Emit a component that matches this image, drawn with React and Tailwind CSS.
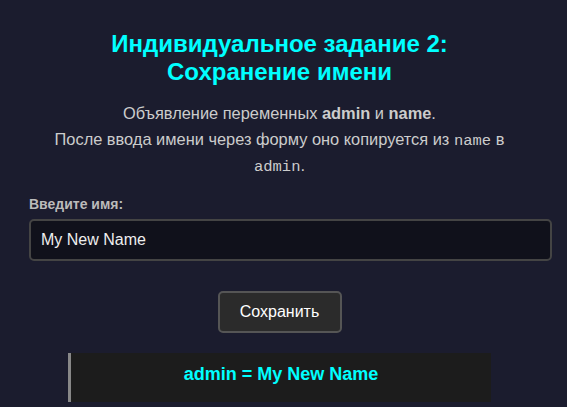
export default function App() {
  const mono = { fontFamily: '"Liberation Mono", "Courier New", monospace' };
  return (
    <div className="min-h-[407px] w-full bg-[#1b1c2e] text-[#cccccc]" style={{ fontFamily: '"Liberation Sans", Arial, sans-serif' }}>
      <div className="w-[501px] ml-[29px] pt-[30px]">
        <h2 className="text-center text-[24px] leading-[28px] font-bold text-[#00ffff]">
          Индивидуальное задание 2:
          <br />
          Сохранение имени
        </h2>
        <p className="mt-[14px] text-center text-[16.4px] leading-[26px] text-[#cccccc]">
          Объявление переменных <b>admin</b> и <b>name</b>.
          <br />
          После ввода имени через форму оно копируется из{" "}
          <code className="text-[15.5px] leading-none" style={mono}>name</code> в
          <br />
          <code className="text-[15.5px] leading-none" style={mono}>admin</code>.
        </p>
        <label className="mt-[18px] block text-[14px] leading-[16px] font-bold text-[#bbbbbb]">Введите имя:</label>
        <input
          className="mt-[7px] block w-[523px] h-[42px] rounded-[5px] border-2 border-[#444444] bg-[#10111b] px-[10px] text-[16px] text-[#eeeeee] outline-none"
          defaultValue="My New Name"
        />
        <div className="mt-[30px] flex justify-center">
          <button className="h-[42px] w-[124px] rounded-[5px] border-2 border-[#555555] bg-[#2b2b2b] text-[16px] text-white">
            Сохранить
          </button>
        </div>
        <div className="mt-[20px] mx-auto w-[423px] h-[49px] border-l-[3px] border-[#888888] bg-[#1c1c1c] flex items-center justify-center">
          <span className="text-[18px] font-bold text-[#00ffff] -mt-[7px]">admin = My New Name</span>
        </div>
      </div>
    </div>
  );
}
